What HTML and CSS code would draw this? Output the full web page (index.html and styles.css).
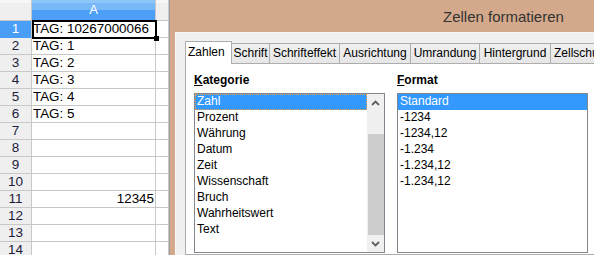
FILE: index.html
```html
<!DOCTYPE html>
<html lang="de">
<head>
<meta charset="utf-8">
<title>Zellen formatieren</title>
<link rel="stylesheet" href="styles.css">
</head>
<body>
<div class="screen">
  <div class="sheet">
    <div class="colhead">
      <div class="corner"></div>
      <div class="ch ch-a">A</div>
      <div class="ch ch-b"></div>
    </div>
    <div class="row"><div class="rh sel">1</div><div class="cell">TAG: 10267000066</div><div class="cell b"></div></div>
    <div class="row"><div class="rh">2</div><div class="cell">TAG: 1</div><div class="cell b"></div></div>
    <div class="row"><div class="rh">3</div><div class="cell">TAG: 2</div><div class="cell b"></div></div>
    <div class="row"><div class="rh">4</div><div class="cell">TAG: 3</div><div class="cell b"></div></div>
    <div class="row"><div class="rh">5</div><div class="cell">TAG: 4</div><div class="cell b"></div></div>
    <div class="row"><div class="rh">6</div><div class="cell">TAG: 5</div><div class="cell b"></div></div>
    <div class="row"><div class="rh">7</div><div class="cell"></div><div class="cell b"></div></div>
    <div class="row"><div class="rh">8</div><div class="cell"></div><div class="cell b"></div></div>
    <div class="row"><div class="rh">9</div><div class="cell"></div><div class="cell b"></div></div>
    <div class="row"><div class="rh">10</div><div class="cell"></div><div class="cell b"></div></div>
    <div class="row"><div class="rh">11</div><div class="cell num">12345</div><div class="cell b"></div></div>
    <div class="row"><div class="rh">12</div><div class="cell"></div><div class="cell b"></div></div>
    <div class="row"><div class="rh">13</div><div class="cell"></div><div class="cell b"></div></div>
    <div class="row"><div class="rh">14</div><div class="cell"></div><div class="cell b"></div></div>
    <div class="cursor"><div class="handle"></div></div>
  </div>

  <div class="dialog">
    <div class="titlebar">Zellen formatieren</div>
    <div class="client">
      <div class="tabs">
        <div class="tab active w-zahlen">Zahlen</div>
        <div class="tab w-schrift">Schrift</div>
        <div class="tab w-effekt">Schrifteffekt</div>
        <div class="tab w-ausr">Ausrichtung</div>
        <div class="tab w-umr">Umrandung</div>
        <div class="tab w-hint">Hintergrund</div>
        <div class="tab w-zell">Zellschutz</div>
      </div>
      <div class="page">
        <div class="group">
          <div class="label"><u>K</u>ategorie</div>
          <div class="listbox">
            <div class="items">
              <div class="item selected focus">Zahl</div>
              <div class="item">Prozent</div>
              <div class="item">Währung</div>
              <div class="item">Datum</div>
              <div class="item">Zeit</div>
              <div class="item">Wissenschaft</div>
              <div class="item">Bruch</div>
              <div class="item">Wahrheitswert</div>
              <div class="item">Text</div>
            </div>
            <div class="vscroll">
              <div class="sbtn"><svg width="9" height="6" viewBox="0 0 9 6"><path d="M1 5 L4.5 1.5 L8 5" fill="none" stroke="#606060" stroke-width="1.8"/></svg></div>
              <div class="track-top"></div>
              <div class="thumb"></div>
              <div class="sbtn down"><svg width="9" height="6" viewBox="0 0 9 6"><path d="M1 1 L4.5 4.5 L8 1" fill="none" stroke="#606060" stroke-width="1.8"/></svg></div>
            </div>
          </div>
        </div>
        <div class="group">
          <div class="label"><u>F</u>ormat</div>
          <div class="listbox">
            <div class="items">
              <div class="item selected">Standard</div>
              <div class="item">-1234</div>
              <div class="item">-1234,12</div>
              <div class="item">-1.234</div>
              <div class="item">-1.234,12</div>
              <div class="item">-1.234,12</div>
            </div>
          </div>
        </div>
      </div>
    </div>
  </div>
</div>
</body>
</html>
```

FILE: styles.css
```css
* { box-sizing: border-box; }
html, body { margin: 0; padding: 0; }
body {
  width: 594px;
  height: 255px;
  overflow: hidden;
  background: #ffffff;
  font-family: "Liberation Sans", Arial, sans-serif;
}
.screen {
  display: flex;
  width: 594px;
  height: 255px;
  overflow: hidden;
}

/* ---------- spreadsheet ---------- */
.sheet {
  position: relative;
  width: 170px;
  flex: none;
  border-right: 1px solid #9c9c9c;
  background: #fff;
  overflow: hidden;
}
.colhead, .row {
  display: flex;
}
.colhead { height: 21px; }
.corner {
  width: 32px;
  border-right: 1px solid #c8c8c8;
  border-bottom: 1px solid #c8c8c8;
  background: linear-gradient(#f7f7f7 0 3px, #efefef 3px);
}
.ch {
  border-right: 1px solid #c8c8c8;
  border-bottom: 1px solid #c8c8c8;
  font-size: 13px;
  line-height: 20px;
  text-align: center;
}
.ch-a {
  width: 124px;
  color: #fff;
  background: linear-gradient(#8ec5fb 0 3px, #78b8f9 3px 10px, #4c9ef6 10px);
  border-bottom-color: #4c9ef6;
}
.ch-b {
  width: 13px;
  background: linear-gradient(#f7f7f7 0 3px, #efefef 3px);
}
.row { height: 17px; }
.rh {
  width: 32px;
  border-right: 1px solid #c8c8c8;
  border-bottom: 1px solid #c8c8c8;
  background: #efefef;
  color: #1c1c3c;
  font-size: 13.5px;
  line-height: 16px;
  text-align: center;
}
.rh.sel {
  background: #4a9ef6;
  color: #fff;
  border-bottom-color: #4a9ef6;
}
.cell {
  width: 124px;
  border-right: 1px solid #c8c8c8;
  border-bottom: 1px solid #c8c8c8;
  font-size: 13.4px;
  line-height: 16px;
  padding-left: 1px;
  color: #000;
  white-space: nowrap;
  overflow: hidden;
}
.cell.b { width: 13px; }
.cell.num { text-align: right; padding-right: 1px; }
.cursor {
  position: absolute;
  left: 32px;
  top: 20px;
  width: 125px;
  height: 19px;
  border: 2px solid #000;
}
.handle {
  position: absolute;
  right: -4px;
  bottom: -4px;
  width: 5px;
  height: 5px;
  background: #000;
}

/* ---------- dialog ---------- */
.dialog {
  flex: 1;
  display: flex;
  flex-direction: column;
  background: #d4a98b;
  min-width: 0;
}
.titlebar {
  height: 32px;
  flex: none;
  padding-left: 273px;
  font-size: 15px;
  line-height: 34px;
  color: #333;
  white-space: nowrap;
}
.client {
  flex: 1;
  margin-left: 5px;
  background: #f0f0f0;
  border-left: 1px solid #f8f8f8;
  border-top: 1px solid #f8f8f8;
  padding: 8px 0 0 9px;
  display: flex;
  flex-direction: column;
  min-width: 0;
}
.tabs {
  display: flex;
  align-items: flex-end;
  height: 22px;
  flex: none;
  position: relative;
  z-index: 1;
}
.tab {
  flex: none;
  height: 20px;
  border: 1px solid #adadad;
  border-bottom: none;
  margin-right: -1px;
  background: linear-gradient(#f0f0f0, #e6e6e6);
  font-size: 12px;
  line-height: 19px;
  text-align: center;
  color: #000;
  white-space: nowrap;
  overflow: hidden;
}
.tab.active {
  height: 23px;
  margin-bottom: -1px;
  background: #fff;
  text-align: left;
  padding-left: 2px;
  line-height: 21px;
  position: relative;
  z-index: 2;
}
.w-zahlen { width: 47px; }
.w-schrift { width: 39px; }
.w-effekt { width: 71px; }
.w-ausr { width: 72px; }
.w-umr { width: 70px; }
.w-hint { width: 72px; }
.w-zell { width: 72px; text-align: left; padding-left: 3px; }

.page {
  flex: 1;
  background: #fff;
  border: 1px solid #adadad;
  border-right: none;
  margin-right: -10px;
  display: flex;
  gap: 12px;
  padding: 9px 0 0 8px;
}
.group {
  display: flex;
  flex-direction: column;
  width: 191px;
  flex: none;
}
.label {
  font-size: 12px;
  font-weight: bold;
  line-height: 14px;
  height: 14px;
  margin-bottom: 6px;
  color: #000;
}
.listbox {
  display: flex;
  height: 160px;
  border: 1px solid #828790;
  background: #fff;
}
.items {
  flex: 1;
  min-width: 0;
}
.item {
  height: 16px;
  line-height: 15px;
  font-size: 12px;
  padding-left: 2px;
  color: #000;
  white-space: nowrap;
}
.item.selected {
  background: #3399ff;
  color: #fff;
}
.item.focus {
  outline: 1px dotted #f5a04a;
  outline-offset: -1px;
}
.vscroll {
  width: 17px;
  flex: none;
  background: #f0f0f0;
  display: flex;
  flex-direction: column;
}
.sbtn {
  height: 17px;
  flex: none;
  display: flex;
  align-items: center;
  justify-content: center;
}
.track-top { height: 23px; flex: none; }
.thumb {
  height: 101px;
  flex: none;
  margin-left: 1px;
  background: #cdcdcd;
}
.sbtn.down { flex: 1; }
```
